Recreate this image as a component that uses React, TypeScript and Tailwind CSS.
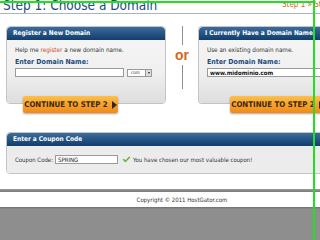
import { Check } from "lucide-react";

function BoxHeader({ children }: { children: React.ReactNode }) {
  return (
    <div className="h-[13px] flex items-center px-[6px] rounded-t-[4px] bg-gradient-to-b from-[#3a6c9c] to-[#123d6c] text-white font-bold text-[6.5px] leading-none">
      {children}
    </div>
  );
}

function ContinueButton() {
  return (
    <div className="h-[17px] w-[95px] flex items-center justify-center gap-[4px] rounded-[2px] bg-gradient-to-b from-[#fcc04a] via-[#f7a12c] to-[#ee8a1a] shadow-[0_1px_2px_rgba(0,0,0,0.35)] text-[#3b2708] font-bold text-[7.8px] leading-none">
      <span>CONTINUE TO STEP 2</span>
      <span className="w-0 h-0 border-y-[4px] border-y-transparent border-l-[5px] border-l-[#2a2a2a]" />
    </div>
  );
}

export default function App() {
  return (
    <div
      className="relative w-[320px] h-[240px] overflow-hidden bg-white"
      style={{ fontFamily: '"DejaVu Sans Condensed", "DejaVu Sans", sans-serif' }}
    >
      <div className="flex flex-col">
        {/* Title */}
        <div className="h-[14px] flex items-end border-b border-[#aab4c0] pl-[4px] overflow-hidden whitespace-nowrap">
          <span className="flex-1 text-[13.5px] leading-none text-[#1d4a7c] mb-[1px] -ml-[1px]">Step 1: Choose a Domain</span>
          <span className="w-[38px] shrink-0 overflow-hidden text-[8px] leading-none text-[#cf6a2c] mb-[4px]">Step 1 » Step 2</span>
        </div>

        {/* Domain boxes */}
        <div className="flex mt-[12px] pl-[6px]">
          <div className="w-[160px] shrink-0 flex flex-col items-center">
            <div className="w-full rounded-[4px] border border-[#c4c4c4] overflow-hidden">
              <BoxHeader>Register a New Domain</BoxHeader>
              <div className="h-[63px] bg-gradient-to-b from-[#f4f4f4] via-[#f0f0f0] to-[#dedede] px-[8px] pt-[7px] text-[6.3px] leading-none text-[#333]">
                <div>
                  Help me <span className="text-[#cc4a1a]">register</span> a new domain name.
                </div>
                <div className="mt-[6px] font-bold text-[7px] text-[#1d4a7c]">Enter Domain Name:</div>
                <div className="mt-[2px] flex items-center gap-[3px]">
                  <div className="w-[109px] h-[9px] bg-white border border-[#9a9a9a]" />
                  <div className="w-[25px] h-[8px] bg-white border border-[#9a9a9a] flex items-center justify-between pl-[3px] text-[4.5px]">
                    <span>com</span>
                    <span className="w-[6px] h-full bg-[#ddd] border-l border-[#9a9a9a] flex items-center justify-center">
                      <span className="w-0 h-0 border-x-[1.5px] border-x-transparent border-t-[2px] border-t-[#222]" />
                    </span>
                  </div>
                </div>
              </div>
            </div>
            <div className="-mt-[8px] -ml-[31px]">
              <ContinueButton />
            </div>
          </div>

          {/* or divider */}
          <div className="w-[32px] shrink-0 flex flex-col items-center">
            <div className="w-[1px] h-[19px] bg-[#8a9098]" />
            <div className="text-[14px] font-bold text-[#d9651c] leading-none my-[3px]" style={{ fontFamily: '"Liberation Sans", sans-serif' }}>or</div>
            <div className="w-[1px] h-[24px] bg-[#8a9098]" />
          </div>

          <div className="w-[140px] shrink-0 flex flex-col">
            <div className="w-full rounded-l-[4px] border border-r-0 border-[#c4c4c4] overflow-hidden">
              <BoxHeader>I Currently Have a Domain Name</BoxHeader>
              <div className="h-[63px] bg-gradient-to-b from-[#f4f4f4] via-[#f0f0f0] to-[#dedede] px-[8px] pt-[7px] text-[6.3px] leading-none text-[#333]">
                <div>Use an existing domain name.</div>
                <div className="mt-[6px] font-bold text-[7px] text-[#1d4a7c]">Enter Domain Name:</div>
                <div className="mt-[2px] w-[140px] h-[9px] bg-white border border-[#9a9a9a] flex items-center px-[2px] text-[6px] font-bold text-[#111]">
                  www.midominio.com
                </div>
              </div>
            </div>
            <div className="-mt-[8px] ml-[32px]">
              <ContinueButton />
            </div>
          </div>
        </div>

        {/* Coupon */}
        <div className="mt-[19px] ml-[6px] w-[320px] rounded-[4px] border border-[#c4c4c4] overflow-hidden">
          <BoxHeader>Enter a Coupon Code</BoxHeader>
          <div className="h-[27px] bg-[#ececec] flex items-center px-[8px] text-[6px] leading-none text-[#333]">
            <span>Coupon Code:</span>
            <div className="ml-[2px] w-[63px] h-[9px] bg-white border border-[#9a9a9a] flex items-center px-[2px] text-[6px] text-[#111]">
              SPRING
            </div>
            <Check className="ml-[4px] w-[9px] h-[9px] text-[#6cb33e]" strokeWidth={4} />
            <span className="ml-[2px]">You have chosen our most valuable coupon!</span>
          </div>
        </div>

        {/* Footer */}
        <div className="mt-[15px] h-[3px] bg-gradient-to-b from-[#9a9a9a] to-[#7a7a7a]" />
        <div className="h-[15px] bg-white flex items-center justify-center pl-[44px] text-[6px] text-[#333]">
          Copyright © 2011 HostGator.com
        </div>
        <div className="h-[2px] bg-gradient-to-b from-[#6f6f6f] to-[#8c8c8c]" />
        <div className="h-[40px] bg-[#8e8e8e]" />
      </div>

      {/* video overlay lines */}
      <div className="absolute left-0 top-[1px] w-[315px] h-[2px] bg-[#22e020]" />
      <div className="absolute left-[313px] top-0 w-[2px] h-[240px] bg-[#22e020]" />
    </div>
  );
}
